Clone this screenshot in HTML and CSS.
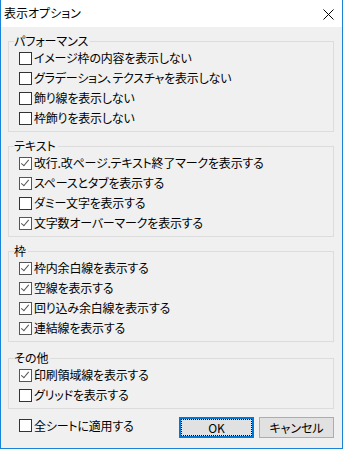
FILE: index.html
```html
<!doctype html>
<html>
<head>
	<title>表示オプション</title>
	<meta charset="utf-8" />
	<link rel="stylesheet" href="styles.css">
</head>
	<body>
		<div class="window">
			<div class="titlebar">
				<span class="title">表示オプション</span>
				<svg class="close" width="11" height="11" viewBox="0 0 11 11">
					<path d="M0.5 0.5 L10.5 10.5 M10.5 0.5 L0.5 10.5" stroke="#000" stroke-width="1" fill="none"/>
				</svg>
			</div>
			<div class="content">
				<fieldset class="group">
					<legend>パフォーマンス</legend>
					<label class="row"><span class="box"></span>イメージ枠の内容を表示しない</label>
					<label class="row"><span class="box"></span>グラデーション、テクスチャを表示しない</label>
					<label class="row"><span class="box"></span>飾り線を表示しない</label>
					<label class="row"><span class="box"></span>枠飾りを表示しない</label>
				</fieldset>
				<fieldset class="group">
					<legend>テキスト</legend>
					<label class="row"><span class="box checked"></span>改行.改ページ.テキスト終了マークを表示する</label>
					<label class="row"><span class="box checked"></span>スペースとタブを表示する</label>
					<label class="row"><span class="box"></span>ダミー文字を表示する</label>
					<label class="row"><span class="box checked"></span>文字数オーバーマークを表示する</label>
				</fieldset>
				<fieldset class="group">
					<legend>枠</legend>
					<label class="row"><span class="box checked"></span>枠内余白線を表示する</label>
					<label class="row"><span class="box checked"></span>空線を表示する</label>
					<label class="row"><span class="box checked"></span>回り込み余白線を表示する</label>
					<label class="row"><span class="box checked"></span>連結線を表示する</label>
				</fieldset>
				<fieldset class="group last">
					<legend>その他</legend>
					<label class="row"><span class="box checked"></span>印刷領域線を表示する</label>
					<label class="row"><span class="box"></span>グリッドを表示する</label>
				</fieldset>
				<div class="footer">
					<label class="row"><span class="box"></span>全シートに適用する</label>
					<div class="buttons">
						<button class="btn default">OK</button>
						<button class="btn">キャンセル</button>
					</div>
				</div>
			</div>
		</div>
	</body>
</html>
```

FILE: styles.css
```css
html {
	background-color: #f0f0f0;
}

body {
	margin: 0px;
	font-family: "Noto Sans CJK JP", "Noto Sans", sans-serif;
	font-size: 12px;
	font-feature-settings: "palt";
	color: #000;
}

.window {
	width: 341px;
	height: 448px;
	border: 1px solid #1883d7;
	border-top: none;
	background-color: #f0f0f0;
	display: flex;
	flex-direction: column;
}

.titlebar {
	height: 25px;
	background-color: #fff;
	display: flex;
	align-items: center;
	justify-content: space-between;
	padding: 0 8px 2px 3px;
}

.title {
	line-height: 14px;
}

.close {
	display: block;
	margin-top: 3px;
}

.content {
	padding: 0 8px 0 7px;
}

.group {
	margin: 7px 0 0 0;
	padding: 0 0 3px 0;
	border: 1px solid #dcdcdc;
	min-width: 0;
}

.group.last {
	margin-top: 9px;
}

.group legend {
	margin-left: 5px;
	padding: 0 2px 0 0;
	line-height: 14px;
}

.row {
	display: flex;
	align-items: center;
	height: 20px;
	padding-left: 10px;
	line-height: 14px;
	white-space: nowrap;
	letter-spacing: -0.2px;
}

.box {
	width: 11px;
	height: 11px;
	border: 1px solid #333;
	background-color: #fff;
	margin-right: 2px;
	flex: none;
	position: relative;
}

.box.checked {
	border-color: #555;
}

.box.checked::after {
	content: "";
	position: absolute;
	left: 3px;
	top: 0px;
	width: 3px;
	height: 7px;
	border-right: 1px solid #555;
	border-bottom: 1px solid #555;
	transform: rotate(40deg);
}

.footer {
	display: flex;
	align-items: center;
	justify-content: space-between;
	margin-top: 6px;
	padding-left: 1px;
}

.footer .row {
	padding-left: 10px;
	margin-top: -2px;
}

.buttons {
	display: flex;
	gap: 5px;
	margin-top: 2px;
}

.btn {
	width: 75px;
	height: 21px;
	padding: 0;
	font-family: "Noto Sans CJK JP", "Noto Sans", sans-serif;
	font-size: 12px;
	font-weight: normal;
	font-feature-settings: "palt";
	line-height: 14px;
	color: #000;
	background-color: #e1e1e1;
	border: 1px solid #adadad;
	border-radius: 0;
}

.btn.default {
	border-color: #0078d7;
	box-shadow: inset 0 0 0 1px #0078d7;
	outline: 1px dotted #000;
	outline-offset: -3px;
}
```
